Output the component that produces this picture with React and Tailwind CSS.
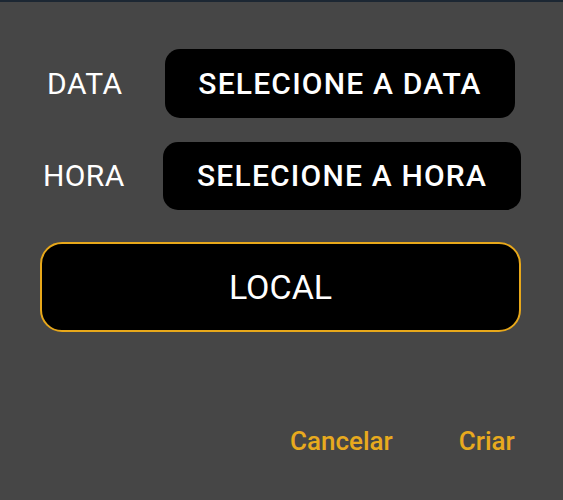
export default function App() {
    return (
        <div className="flex h-[500px] w-[563px] flex-col border-t-2 border-[#1c2733] bg-[#464646] font-['Roboto',sans-serif] text-white">
            <div className="mt-[47px] flex items-center">
                <div className="w-[165px] pl-[47px] text-[30px] leading-none tracking-[0.6px]">DATA</div>
                <button className="flex h-[69px] w-[350px] items-center justify-center rounded-[15px] bg-black text-[30px] font-medium leading-none tracking-[1.2px]">
                    SELECIONE A DATA
                </button>
            </div>
            <div className="mt-[24px] flex items-center">
                <div className="w-[163px] pl-[43px] text-[30px] leading-none tracking-[0.4px]">HORA</div>
                <button className="flex h-[68px] w-[358px] items-center justify-center rounded-[15px] bg-black text-[30px] font-medium leading-none tracking-[1.2px]">
                    SELECIONE A HORA
                </button>
            </div>
            <div className="ml-[40px] mt-[32px] flex h-[90px] w-[481px] items-center justify-center rounded-[22px] border-2 border-[#e8a81a] bg-black text-[34px] leading-none">
                LOCAL
            </div>
            <div className="mt-[96px] flex items-center text-[26px] font-medium leading-none text-[#e8aa1e]">
                <span className="ml-[290px]">Cancelar</span>
                <span className="ml-[66px]">Criar</span>
            </div>
        </div>
    );
}
